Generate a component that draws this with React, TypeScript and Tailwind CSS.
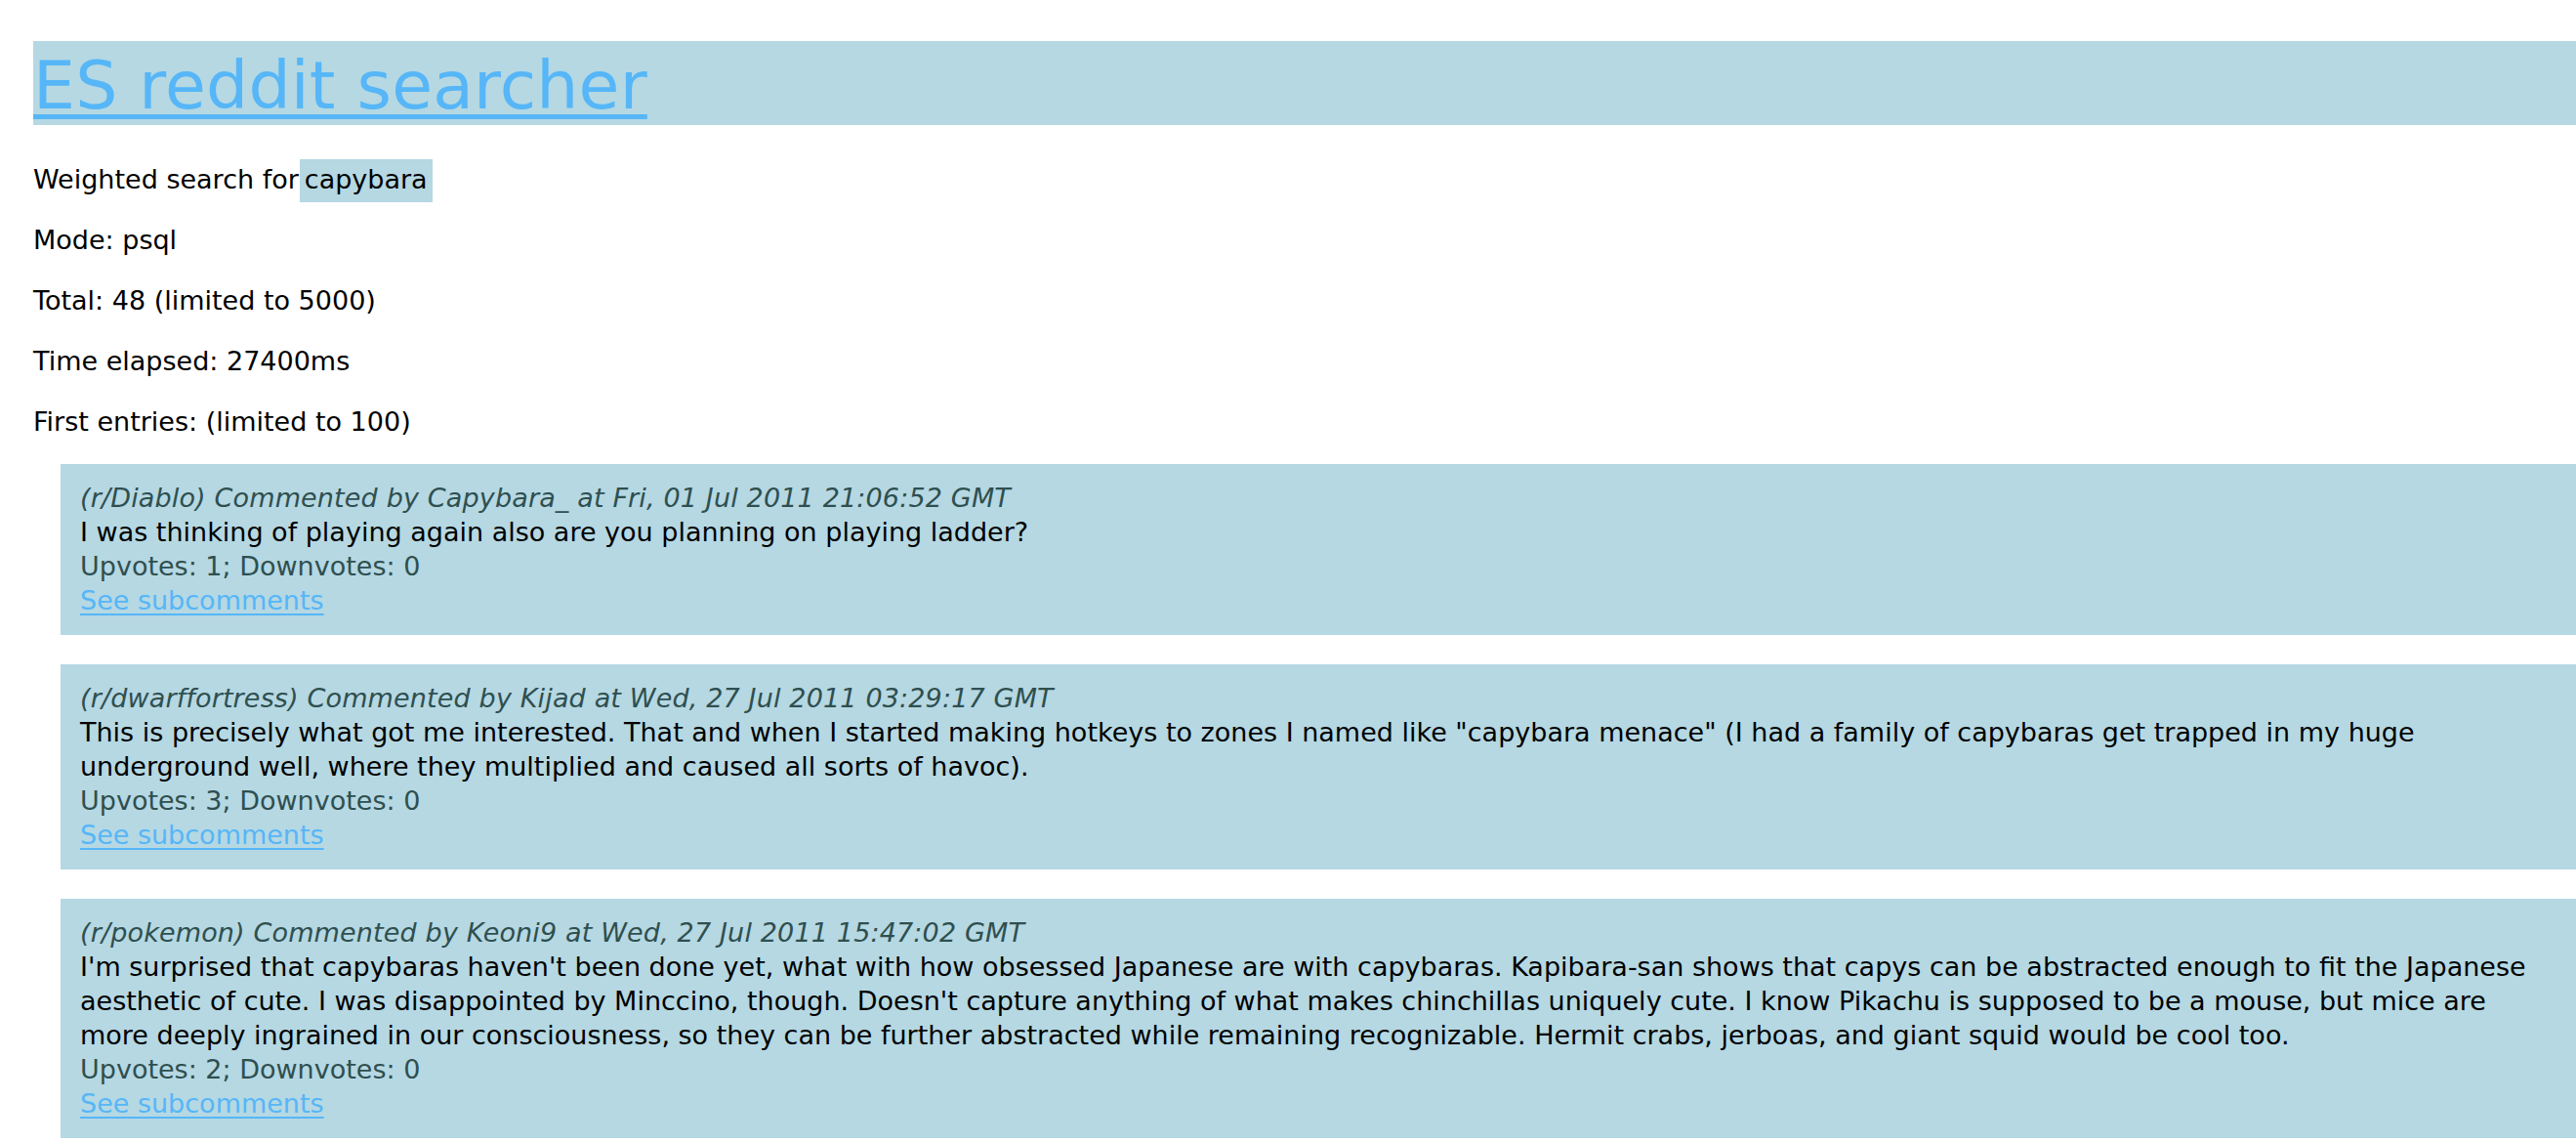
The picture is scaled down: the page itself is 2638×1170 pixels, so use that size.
import React from 'react';

interface Comment {
  subreddit: string;
  author: string;
  date: string;
  body: string;
  ups: number;
  downs: number;
}

const comments: Comment[] = [
  {
    subreddit: 'Diablo',
    author: 'Capybara_',
    date: 'Fri, 01 Jul 2011 21:06:52 GMT',
    body: 'I was thinking of playing again also are you planning on playing ladder?',
    ups: 1,
    downs: 0,
  },
  {
    subreddit: 'dwarffortress',
    author: 'Kijad',
    date: 'Wed, 27 Jul 2011 03:29:17 GMT',
    body: 'This is precisely what got me interested. That and when I started making hotkeys to zones I named like "capybara menace" (I had a family of capybaras get trapped in my huge underground well, where they multiplied and caused all sorts of havoc).',
    ups: 3,
    downs: 0,
  },
  {
    subreddit: 'pokemon',
    author: 'Keoni9',
    date: 'Wed, 27 Jul 2011 15:47:02 GMT',
    body: "I'm surprised that capybaras haven't been done yet, what with how obsessed Japanese are with capybaras. Kapibara-san shows that capys can be abstracted enough to fit the Japanese aesthetic of cute. I was disappointed by Minccino, though. Doesn't capture anything of what makes chinchillas uniquely cute. I know Pikachu is supposed to be a mouse, but mice are more deeply ingrained in our consciousness, so they can be further abstracted while remaining recognizable. Hermit crabs, jerboas, and giant squid would be cool too.",
    ups: 2,
    downs: 0,
  },
];

function CommentCard({ comment }: { comment: Comment }) {
  return (
    <div className="bg-[#b5d8e3] ml-[28px] mb-[30px] px-[20px] pt-[17px] pb-[18px] leading-[35px]">
      <div className="italic text-[#2f4f4f] tracking-[0.15px]">
        (r/{comment.subreddit}) Commented by {comment.author} at {comment.date}
      </div>
      <div className="text-black">{comment.body}</div>
      <div className="text-[#2f4f4f]">
        Upvotes: {comment.ups}; Downvotes: {comment.downs}
      </div>
      <a href="#" className="text-[#56b6f7] underline decoration-[2px] underline-offset-[4px]">
        See subcomments
      </a>
    </div>
  );
}

export default function App() {
  return (
    <div className="min-h-screen bg-white pl-[34px] pt-[42px] text-[27px] text-black font-['DejaVu_Sans',sans-serif]">
      {/* Title bar */}
      <h1 className="bg-[#b5d8e3] h-[86px] pt-[7px] text-[68px] leading-[78px] tracking-[0.2px]">
        <a href="#" className="text-[#56b6f7] underline decoration-[5px] underline-offset-[6px]">
          ES reddit searcher
        </a>
      </h1>

      <div className="mt-[38px] leading-[35px]">
        <p className="mb-[27px]">
          Weighted search for
          <span className="ml-[1px] bg-[#b5d8e3] px-[5px] pt-[5px] pb-[8px]">capybara</span>
        </p>
        <p className="mb-[27px]">Mode: psql</p>
        <p className="mb-[27px]">Total: 48 (limited to 5000)</p>
        <p className="mb-[27px]">Time elapsed: 27400ms</p>
        <p className="mb-[26px]">First entries: (limited to 100)</p>
      </div>

      {comments.map((c) => (
        <CommentCard key={c.subreddit} comment={c} />
      ))}
    </div>
  );
}
